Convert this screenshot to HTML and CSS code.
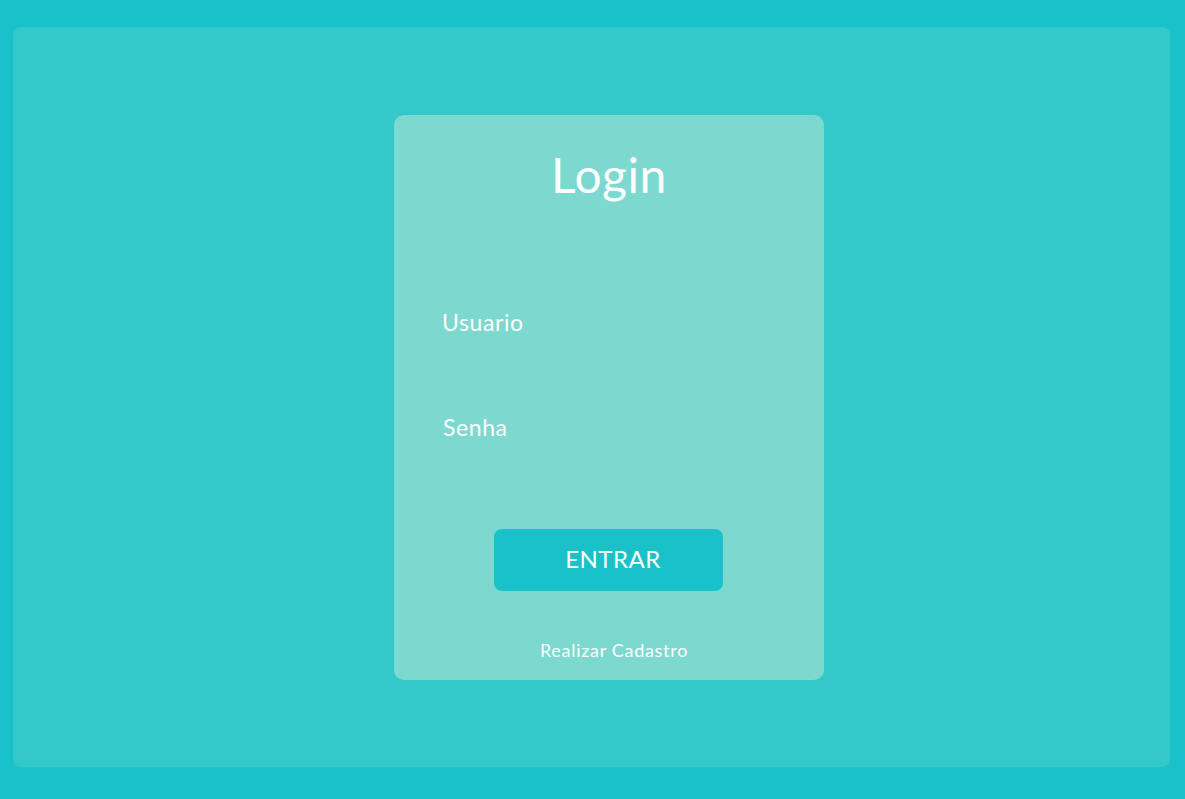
FILE: index.html
```html
<!DOCTYPE html>
<html lang="pt">
<head>
<meta charset="utf-8">
<title>Login</title>
<link rel="stylesheet" href="styles.css">
</head>
<body>
<main class="panel">
  <section class="card">
    <h1 class="title">Login</h1>
    <div class="field field-user">Usuario</div>
    <div class="field field-pass">Senha</div>
    <button class="btn" type="button">ENTRAR</button>
    <a class="link" href="#">Realizar Cadastro</a>
  </section>
</main>
</body>
</html>
```

FILE: styles.css
```css
html, body {
  margin: 0;
  padding: 0;
}
body {
  background: #19c2c9;
  font-family: "Lato", "Open Sans", sans-serif;
  color: #ffffff;
  height: 799px;
  overflow: hidden;
}
.panel {
  margin: 27px 15px 0 13px;
  height: 740px;
  box-sizing: border-box;
  background: #35c8cb;
  border-radius: 8px;
  padding: 88px 0 0 381px;
}
.card {
  width: 430px;
  height: 565px;
  box-sizing: border-box;
  background: #7dd8cf;
  border-radius: 10px;
  display: flex;
  flex-direction: column;
  align-items: stretch;
  padding-top: 31px;
}
.title {
  margin: 0;
  font-weight: 400;
  font-size: 48px;
  line-height: 58px;
  text-align: center;
  letter-spacing: 0.5px;
}
.field {
  font-size: 23px;
  line-height: 28px;
  letter-spacing: 0.6px;
  padding-left: 48px;
}
.field-user {
  margin-top: 104px;
}
.field-pass {
  margin-top: 77px;
  padding-left: 49px;
}
.btn {
  align-self: flex-start;
  margin: 88px 0 0 100px;
  width: 229px;
  height: 62px;
  border: none;
  border-radius: 8px;
  background: #19c2c9;
  color: #ffffff;
  font-family: inherit;
  font-size: 24px;
  letter-spacing: 0.5px;
  padding: 0 0 4px 9px;
}
.link {
  margin-top: 48px;
  text-align: center;
  padding-left: 10px;
  font-size: 18px;
  line-height: 22px;
  letter-spacing: 0.7px;
  color: #ffffff;
  text-decoration: none;
}
```
